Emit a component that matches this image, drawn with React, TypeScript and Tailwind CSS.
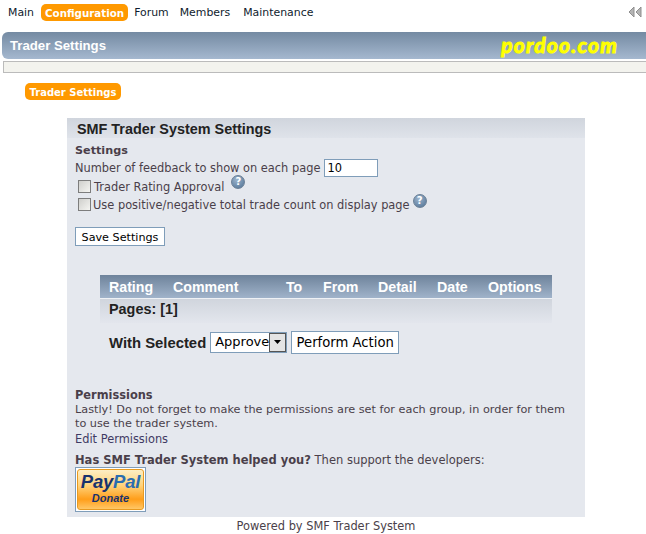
const verdana = "font-['DejaVu_Sans',sans-serif]";

const columns = [
  { label: "Rating", width: "w-[64px]" },
  { label: "Comment", width: "w-[113px]" },
  { label: "To", width: "w-[37px]" },
  { label: "From", width: "w-[55px]" },
  { label: "Detail", width: "w-[59px]" },
  { label: "Date", width: "w-[51px]" },
  { label: "Options", width: "" },
];

function HelpIcon() {
  return (
    <span className="w-[14px] h-[14px] rounded-full bg-[radial-gradient(circle_at_40%_30%,#9db4cc,#4f7194)] border border-[#6a7f95] text-white text-[10px] leading-[12px] font-bold text-center inline-block">
      ?
    </span>
  );
}

function Check() {
  return (
    <span className="w-[13px] h-[13px] mb-[4px] border border-[#7d7d7d] bg-[linear-gradient(135deg,#cfcfcc,#f5f5f2)] inline-block shrink-0" />
  );
}

export default function App() {
  return (
    <div className={`w-[646px] h-[534px] bg-white overflow-hidden text-[11.4px] text-[#4a3f4a] ${verdana}`}>
      <div className="h-[32px] pt-[4px] pl-[3px] pr-[4px] flex items-start justify-between">
        <div className="flex items-center h-[17px] text-[10.9px] leading-[18px] text-[#0f1c2e]">
          <span className="px-[5px]">Main</span>
          <span className="ml-[2px] px-[4px] h-[17px] leading-[18px] rounded-[5px] bg-[#ff9900] text-white font-bold text-[10.3px]">
            Configuration
          </span>
          <span className="pl-[6px] pr-[5px]">Forum</span>
          <span className="pl-[6px] pr-[7px]">Members</span>
          <span className="px-[6px]">Maintenance</span>
        </div>
        <svg width="14" height="12" viewBox="0 0 14 12" className="mt-[2px]">
          <path d="M6 1 L1 6 L6 11 Z" fill="#b4b4b4" stroke="#8f8f8f" />
          <path d="M13 1 L8 6 L13 11 Z" fill="#b4b4b4" stroke="#8f8f8f" />
        </svg>
      </div>

      <div className="ml-[2px] h-[27px] rounded-tl-[6px] rounded-bl-[6px] bg-[linear-gradient(#748aa2,#a5b8cf)] flex items-center justify-between pl-[8px] pr-[28px]">
        <span className="text-white font-bold text-[13.2px] font-['Liberation_Sans',sans-serif]">Trader Settings</span>
        <span className="mb-[3px] text-[#ffff00] font-bold italic text-[21px] tracking-[1.2px] leading-none [-webkit-text-stroke:1px_#ffff00] font-['Lato',sans-serif]">
          pordoo.com
        </span>
      </div>
      <div className="ml-[3px] mt-[2px] h-[12px] bg-[#f3f3ee] border-y border-l border-[#bbbbbb]" />

      <div className="ml-[25px] mt-[10px] w-[96px] h-[17px] rounded-[5px] bg-[#ff9900] text-white font-bold text-center leading-[19px] text-[10px]">
        Trader Settings
      </div>

      <div className="ml-[67px] mt-[18px] w-[518px] h-[399px] bg-[#e5e8ee] flex flex-col">
        <div className="h-[20px] pl-[10px] bg-[linear-gradient(#d0d5dd,#dfe3ea)] text-[#222222] font-bold text-[14.4px] leading-[22px] font-['Liberation_Sans',sans-serif]">
          SMF Trader System Settings
        </div>

        <div className="pl-[8px] pt-[6px] flex flex-col">
          <div className="font-bold h-[14px] leading-[14px] text-[11.2px]">Settings</div>
          <div className="flex items-center h-[18px] mt-[1px]">
            <span className="mt-[2px]">Number of feedback to show on each page</span>
            <span className="ml-[4px] w-[54px] h-[18px] border border-[#7f9db9] bg-white text-black pl-[2px] leading-[16px] shrink-0">10</span>
          </div>
          <div className="flex items-center h-[18px] pl-[3px] mt-[2px]">
            <Check />
            <span className="ml-[3px]">Trader Rating Approval</span>
            <span className="ml-[7px] -mt-[12px] flex"><HelpIcon /></span>
          </div>
          <div className="flex items-center h-[18px] pl-[3px]">
            <Check />
            <span className="ml-[2px]">Use positive/negative total trade count on display page</span>
            <span className="ml-[3px] -mt-[10px] flex"><HelpIcon /></span>
          </div>
          <div className="mt-[12px] w-[90px] h-[19px] border border-[#7f9db9] bg-white text-black text-center leading-[19px] text-[11.2px]">
            Save Settings
          </div>
        </div>

        <div className="ml-[33px] mt-[29px] w-[452px]">
          <div className="h-[24px] pt-[2px] bg-[linear-gradient(#6e839b,#a0b3ca)] border-b border-[#eef1f5] flex items-center pl-[9px] text-white font-bold text-[14.2px] font-['Liberation_Sans',sans-serif]">
            {columns.map((col) => (
              <span key={col.label} className={col.width}>{col.label}</span>
            ))}
          </div>
          <div className="h-[24px] pl-[9px] bg-[linear-gradient(#d0d5dd,#e3e6ed)] text-[#222222] font-bold text-[14.4px] leading-[20px] font-['Liberation_Sans',sans-serif]">
            Pages: [1]
          </div>
          <div className="flex items-center h-[32px] pl-[9px] mt-[3px]">
            <span className="mt-[2px] text-[#222222] font-bold text-[14.85px] font-['Liberation_Sans',sans-serif]">With Selected</span>
            <span className="ml-[4px] w-[77px] h-[21px] border border-[#7f9db9] bg-white text-black pl-[4px] flex items-center justify-between overflow-hidden">
              <span className="text-[13px]">Approve</span>
              <span className="w-[17px] h-[19px] bg-[#e4e4e4] border border-[#555555] flex items-center justify-center shrink-0">
                <svg width="7" height="4" viewBox="0 0 7 4"><path d="M0 0 H7 L3.5 4 Z" fill="#000" /></svg>
              </span>
            </span>
            <span className="ml-[4px] w-[108px] h-[23px] border border-[#7f9db9] bg-white text-black text-[13.2px] text-center leading-[21px]">
              Perform Action
            </span>
          </div>
        </div>

        <div className="pl-[8px] mt-[30px] flex flex-col">
          <div className="font-bold h-[14px] leading-[14px]">Permissions</div>
          <div className="mt-[1px] text-[11.25px] leading-[14px] w-[500px]">
            Lastly! Do not forget to make the permissions are set for each group, in order for them to use the trader system.
          </div>
          <div className="text-[#3f3a63] h-[15px] leading-[15px] mt-[1px]">Edit Permissions</div>
          <div className="mt-[6px] h-[14px] leading-[15px] text-[11.5px]">
            <span className="font-bold">Has SMF Trader System helped you?</span> Then support the developers:
          </div>
          <div className="w-[71px] h-[45px] border border-[#7f9db9] bg-white p-[1px] mt-[0px]">
            <div className="w-full h-full rounded-[3px] border border-[#e89a20] bg-[linear-gradient(#fdeec4_0%,#ffd27a_40%,#ff9e1a_75%,#ffc766)] flex flex-col items-center font-['Liberation_Sans',sans-serif] italic font-bold">
              <span className="text-[18.5px] leading-[20px] mt-[2px] text-[#17326e] tracking-[-0.2px]">
                Pay<span className="text-[#2a6db0]">Pal</span>
              </span>
              <span className="text-[11px] leading-[12px] text-[#17326e]">Donate</span>
            </div>
          </div>
        </div>
      </div>

      <div className="text-center w-[646px] mt-[2px] leading-[14px] pl-[6px]">
        Powered by SMF Trader System
      </div>
    </div>
  );
}
